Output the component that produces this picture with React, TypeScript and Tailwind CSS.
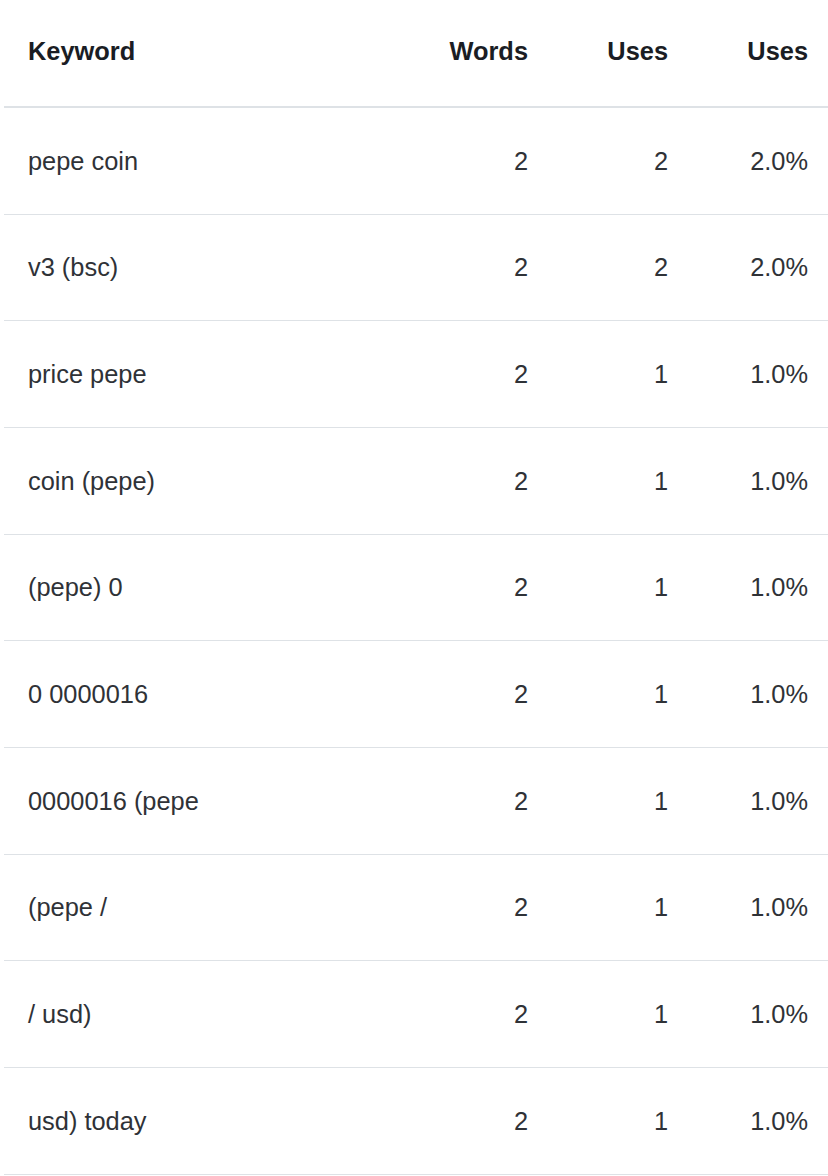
const rows: [string, number, number, string][] = [
  ['pepe coin', 2, 2, '2.0%'],
  ['v3 (bsc)', 2, 2, '2.0%'],
  ['price pepe', 2, 1, '1.0%'],
  ['coin (pepe)', 2, 1, '1.0%'],
  ['(pepe) 0', 2, 1, '1.0%'],
  ['0 0000016', 2, 1, '1.0%'],
  ['0000016 (pepe', 2, 1, '1.0%'],
  ['(pepe /', 2, 1, '1.0%'],
  ['/ usd)', 2, 1, '1.0%'],
  ['usd) today', 2, 1, '1.0%'],
];

export default function App() {
  return (
    <div className="min-h-screen bg-white pl-[4px] font-['Liberation_Sans',Arial,sans-serif] text-[25.4px]">
      <div className="grid h-[108px] grid-cols-[404px_140px_140px_140px] items-center border-b-2 border-[#dee2e6] pb-1 font-bold text-[#1a1d24]">
        <div className="pl-6">Keyword</div>
        <div className="pr-5 text-right">Words</div>
        <div className="pr-5 text-right">Uses</div>
        <div className="pr-5 text-right">Uses</div>
      </div>
      {rows.map(([kw, words, uses, pct]) => (
        <div
          key={kw}
          className="grid h-[106.67px] grid-cols-[404px_140px_140px_140px] items-center border-b border-[#dee2e6] text-[#2f3237]"
        >
          <div className="pl-6">{kw}</div>
          <div className="pr-5 text-right">{words}</div>
          <div className="pr-5 text-right">{uses}</div>
          <div className="pr-5 text-right">{pct}</div>
        </div>
      ))}
    </div>
  );
}
